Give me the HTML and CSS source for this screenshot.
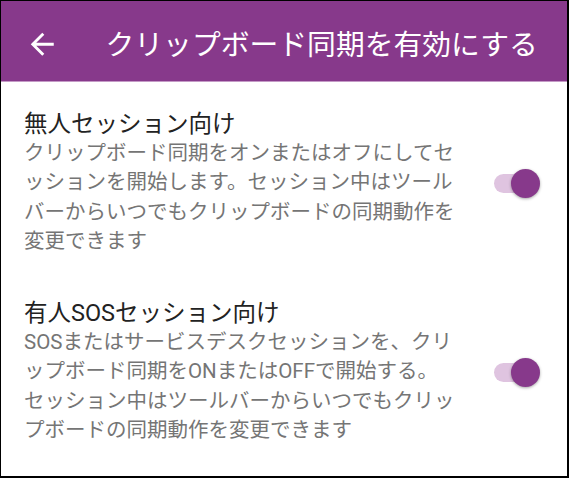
FILE: index.html
```html
<!DOCTYPE html>
<html lang="ja">
<head>
<meta charset="utf-8">
<title>クリップボード同期を有効にする</title>
<link rel="stylesheet" href="styles.css">
</head>
<body>
<div class="screen">
  <header class="appbar">
    <svg class="back" viewBox="0 0 24 24" aria-hidden="true"><path d="M20 11H7.83l5.59-5.59L12 4l-8 8 8 8 1.41-1.41L7.83 13H20v-2z"/></svg>
    <h1 class="appbar-title">クリップボード同期を有効にする</h1>
  </header>
  <main class="list">
    <div class="item">
      <div class="item-text">
        <div class="item-title">無人セッション向け</div>
        <div class="item-desc">クリップボード同期をオンまたはオフにしてセ<br>ッションを開始します。セッション中はツール<br>バーからいつでもクリップボードの同期動作を<br>変更できます</div>
      </div>
      <div class="switch on"><span class="thumb"></span></div>
    </div>
    <div class="item">
      <div class="item-text">
        <div class="item-title">有人SOSセッション向け</div>
        <div class="item-desc">SOSまたはサービスデスクセッションを、クリ<br>ップボード同期をONまたはOFFで開始する。<br>セッション中はツールバーからいつでもクリッ<br>プボードの同期動作を変更できます</div>
      </div>
      <div class="switch on"><span class="thumb"></span></div>
    </div>
  </main>
</div>
</body>
</html>
```

FILE: styles.css
```css
html, body {
  margin: 0;
  padding: 0;
  background: #ffffff;
}

.screen {
  width: 569px;
  height: 478px;
  box-sizing: border-box;
  border-style: solid;
  border-color: #000;
  border-width: 1px 2px 2px 1px;
  background: #fff;
  overflow: hidden;
  font-family: Roboto, "Noto Sans CJK JP", sans-serif;
}

.appbar {
  height: 81px;
  box-sizing: border-box;
  padding: 7px 0 0 24px;
  background: #87398b;
  border-bottom: 1px solid #c49ac6;
  display: flex;
  align-items: center;
}

.back {
  width: 34.5px;
  height: 34.5px;
  fill: #ffffff;
  flex: none;
}

.appbar-title {
  margin: 0 0 0 46px;
  font-size: 28.8px;
  font-weight: 400;
  line-height: 36px;
  color: #ffffff;
  white-space: nowrap;
}

.list {
  padding-top: 6.5px;
}

.item {
  display: flex;
  align-items: center;
  padding: 21px 28px 21px 23px;
}

.item-text {
  flex: 1;
  min-width: 0;
}

.item-title {
  font-size: 23.5px;
  line-height: 29px;
  color: #222222;
  white-space: nowrap;
}

.item-desc {
  font-size: 20.5px;
  line-height: 29.5px;
  color: #757575;
  white-space: nowrap;
}

.switch {
  position: relative;
  flex: none;
  width: 45px;
  height: 19px;
  border-radius: 10px;
  background: #dfc4e0;
}

.switch .thumb {
  position: absolute;
  right: -1px;
  top: 50%;
  width: 29px;
  height: 29px;
  margin-top: -14.5px;
  border-radius: 50%;
  background: #87398b;
  box-shadow: 0 1px 3px rgba(0, 0, 0, 0.35);
}
```
